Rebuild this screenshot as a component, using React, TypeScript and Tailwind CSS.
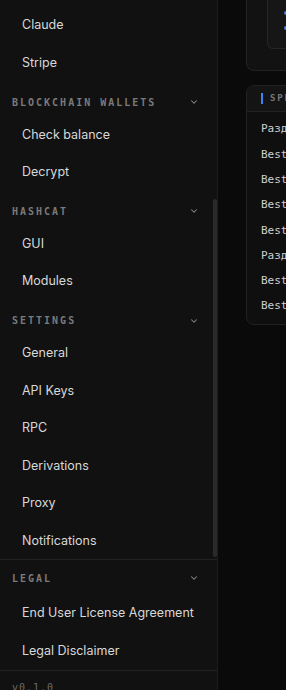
import React from "react";

const Chevron = () => (
  <svg width="10" height="10" viewBox="0 0 24 24" fill="none" stroke="#8a8a8a" strokeWidth="2.5" strokeLinecap="round" strokeLinejoin="round">
    <path d="M6 9l6 6 6-6" />
  </svg>
);

const Item = ({ label }: { label: string }) => (
  <div className="h-[37.6px] flex items-center pl-[22px] text-[12.5px] text-[#d8d8d8] shrink-0" style={{ fontFamily: "Inter, 'Noto Sans', sans-serif" }}>
    {label}
  </div>
);

const Header = ({ label }: { label: string }) => (
  <div className="mt-[8px] mb-[2px] h-[24px] flex items-center justify-between pl-[12px] pr-[18px] shrink-0">
    <span className="text-[10px] tracking-[0.2em] text-[#7a7a7a] font-bold" style={{ fontFamily: "'DejaVu Sans Mono', monospace" }}>
      {label}
    </span>
    <Chevron />
  </div>
);

export default function App() {
  const rows = ["Разд", "Best", "Best", "Best", "Best", "Разд", "Best", "Best"];
  return (
    <div className="w-[286px] h-[690px] flex bg-[#0a0a0a] overflow-hidden">
      <aside className="w-[218px] shrink-0 h-full flex flex-col bg-[#111111] border-r border-[#1c1c1c]">
        <div className="relative h-[560px] shrink-0 overflow-hidden border-b border-[#222222]">
          <div className="flex flex-col pt-[7px]">
            <Item label="Claude" />
            <Item label="Stripe" />
            <Header label="BLOCKCHAIN WALLETS" />
            <Item label="Check balance" />
            <Item label="Decrypt" />
            <Header label="HASHCAT" />
            <Item label="GUI" />
            <Item label="Modules" />
            <Header label="SETTINGS" />
            <Item label="General" />
            <Item label="API Keys" />
            <Item label="RPC" />
            <Item label="Derivations" />
            <Item label="Proxy" />
            <Item label="Notifications" />
          </div>
          <div className="absolute right-0 top-[199px] w-[4px] h-[358px] bg-[#2a2a2a] rounded-sm" />
        </div>
        <div className="flex flex-col border-b border-[#222222]">
          <div className="h-[6px]" />
          <div className="h-[24px] flex items-center justify-between pl-[12px] pr-[18px]">
            <span className="text-[10px] tracking-[0.2em] text-[#7a7a7a] font-bold" style={{ fontFamily: "'DejaVu Sans Mono', monospace" }}>LEGAL</span>
            <Chevron />
          </div>
          <div className="h-[5px]" />
          <Item label="End User License Agreement" />
          <Item label="Legal Disclaimer" />
        </div>
        <div className="pl-[12px] pt-[9px] text-[10px] tracking-[0.1em] text-[#6a6a6a]" style={{ fontFamily: "'DejaVu Sans Mono', monospace" }}>
          v0.1.0
        </div>
      </aside>
      <main className="flex-1 pl-[28px] flex flex-col gap-[14px] overflow-hidden">
        <div className="w-[200px] h-[72px] -mt-[1px] shrink-0 rounded-b-[8px] border border-t-0 border-[#222222] bg-[#121212] pl-[20px]">
          <div className="w-[180px] h-[50px] rounded-b-[6px] border border-t-0 border-[#262626] bg-[#161616] pl-[16px] flex flex-col pt-[12px] gap-[8px]">
            <div className="w-[4px] h-[4px] bg-[#3b82f6] rounded-full" />
            <div className="w-[4px] h-[4px] bg-[#3b82f6] rounded-full mt-[3px]" />
          </div>
        </div>
        <div className="w-[200px] h-[240px] shrink-0 rounded-[8px] border border-[#222222] bg-[#0f0f0f] overflow-hidden">
          <div className="h-[26px] flex items-center pl-[14px] gap-[7px] border-b border-[#222222] bg-[#141414]">
            <div className="w-[2px] h-[11px] bg-[#3b82f6]" />
            <span className="text-[9px] tracking-[0.2em] text-[#777777] font-bold" style={{ fontFamily: "'DejaVu Sans Mono', monospace" }}>SPECIFICATIONS</span>
          </div>
          <div className="flex flex-col pt-[5px]">
            {rows.map((r, i) => (
              <div key={i} className="h-[25.3px] flex items-center pl-[14px] text-[11px] text-[#cfcfcf]" style={{ fontFamily: "'DejaVu Sans Mono', monospace" }}>
                {r}
              </div>
            ))}
          </div>
        </div>
      </main>
    </div>
  );
}
